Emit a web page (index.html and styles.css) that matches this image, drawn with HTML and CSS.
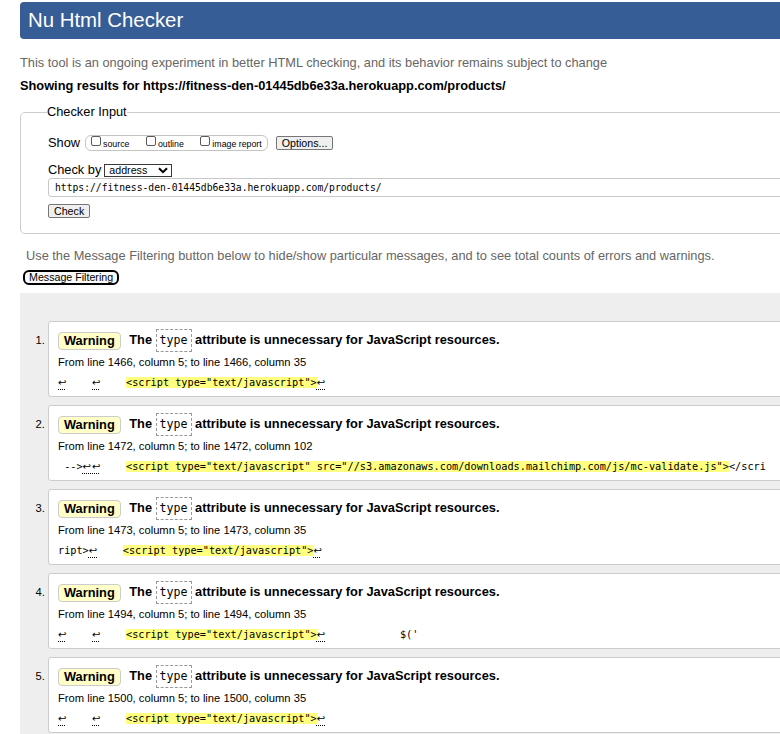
FILE: index.html
```html
<!DOCTYPE html>
<html lang="en">
<head>
<meta charset="utf-8">
<title>Nu Html Checker</title>
<link rel="stylesheet" href="styles.css">
</head>
<body>
<div class="page">
  <h1 class="masthead">Nu Html Checker</h1>
  <p class="intro">This tool is an ongoing experiment in better HTML checking, and its behavior remains subject to change</p>
  <p class="showing">Showing results for https://fitness-den-01445db6e33a.herokuapp.com/products/</p>
  <form class="checker">
    <fieldset class="checker-input">
      <legend>Checker Input</legend>
      <div class="row row-show">
        <span class="label">Show</span>
        <span class="show-box">
          <label class="opt"><input type="checkbox"><span>source</span></label>
          <label class="opt"><input type="checkbox"><span>outline</span></label>
          <label class="opt"><input type="checkbox"><span>image report</span></label>
        </span>
        <button type="button" class="btn btn-options">Options...</button>
      </div>
      <div class="row row-by">
        <span class="label">Check by</span>
        <span class="select">address<svg width="10" height="7" viewBox="0 0 10 7"><path d="M1 1.2 L5 5.2 L9 1.2" fill="none" stroke="#000" stroke-width="2"/></svg></span>
      </div>
      <input class="url" type="text" value="https://fitness-den-01445db6e33a.herokuapp.com/products/">
      <div class="row row-submit"><button type="button" class="btn">Check</button></div>
    </fieldset>
  </form>
  <p class="filter-note">Use the Message Filtering button below to hide/show particular messages, and to see total counts of errors and warnings.</p>
  <button type="button" class="filter-btn">Message Filtering</button>
  <div class="results">
    <ol class="messages">
      <li class="msg">
        <p class="title"><span class="badge">Warning</span> The <code class="kw">type</code> attribute is unnecessary for JavaScript resources.</p>
        <p class="loc">From line 1466, column 5; to line 1466, column 35</p>
        <p class="extract"><span class="lf">↩</span>    <span class="lf">↩</span>    <mark>&lt;script type="text/javascript"&gt;</mark><span class="lf">↩</span></p>
      </li>
      <li class="msg">
        <p class="title"><span class="badge">Warning</span> The <code class="kw">type</code> attribute is unnecessary for JavaScript resources.</p>
        <p class="loc">From line 1472, column 5; to line 1472, column 102</p>
        <p class="extract"> --&gt;<span class="lf">↩</span><span class="lf">↩</span>    <mark>&lt;script type="text/javascript" src="//s3.amazonaws.com/downloads.mailchimp.com/js/mc-validate.js"&gt;</mark>&lt;/scri</p>
      </li>
      <li class="msg">
        <p class="title"><span class="badge">Warning</span> The <code class="kw">type</code> attribute is unnecessary for JavaScript resources.</p>
        <p class="loc">From line 1473, column 5; to line 1473, column 35</p>
        <p class="extract">ript&gt;<span class="lf">↩</span>    <mark>&lt;script type="text/javascript"&gt;</mark><span class="lf">↩</span></p>
      </li>
      <li class="msg">
        <p class="title"><span class="badge">Warning</span> The <code class="kw">type</code> attribute is unnecessary for JavaScript resources.</p>
        <p class="loc">From line 1494, column 5; to line 1494, column 35</p>
        <p class="extract"><span class="lf">↩</span>    <span class="lf">↩</span>    <mark>&lt;script type="text/javascript"&gt;</mark><span class="lf">↩</span>            $('</p>
      </li>
      <li class="msg">
        <p class="title"><span class="badge">Warning</span> The <code class="kw">type</code> attribute is unnecessary for JavaScript resources.</p>
        <p class="loc">From line 1500, column 5; to line 1500, column 35</p>
        <p class="extract"><span class="lf">↩</span>    <span class="lf">↩</span>    <mark>&lt;script type="text/javascript"&gt;</mark><span class="lf">↩</span></p>
      </li>
    </ol>
  </div>
</div>
</body>
</html>
```

FILE: styles.css
```css
html {
  overflow: hidden;
}

body {
  margin: 0;
  background: #fff;
  color: #000;
  font-family: "Liberation Sans", Arial, sans-serif;
  font-size: 12.8px;
}

.page {
  width: 1000px;
  padding: 2px 0 0 20px;
}

.masthead {
  margin: 0;
  height: 37px;
  line-height: 37px;
  padding-left: 8px;
  background: #365d95;
  color: #fff;
  font-size: 20.4px;
  font-weight: normal;
  border-radius: 4px 0 0 4px;
}

.intro {
  margin: 16px 0 0;
  line-height: 16px;
  color: #666;
}

.showing {
  margin: 7px 0 0;
  line-height: 16px;
  font-weight: bold;
}

.checker {
  margin: 10px 0 0;
}

.checker-input {
  margin: 0;
  padding: 15px 0 15px 27px;
  border: 1px solid #ccc;
  border-radius: 5px;
  min-width: 0;
}

.checker-input legend {
  padding: 0;
  margin-left: -1px;
  line-height: 16px;
  font-size: 12.8px;
}

.row {
  display: flex;
  align-items: center;
}

.row-show {
  height: 16px;
}

.label {
  line-height: 16px;
}

.show-box {
  display: flex;
  align-items: flex-start;
  box-sizing: border-box;
  height: 16px;
  margin-left: 5px;
  padding: 0 5px 0 5px;
  border: 1px solid #c4c4c4;
  border-radius: 6px;
}

.opt {
  display: flex;
  align-items: flex-start;
}

.opt + .opt {
  margin-left: 16.5px;
}

.opt input {
  appearance: none;
  -webkit-appearance: none;
  box-sizing: border-box;
  width: 10px;
  height: 10px;
  margin: 0 2px 0 0;
  border: 1px solid #5a5a5a;
  border-radius: 2px;
  background: #fff;
}

.opt span {
  font-size: 8.8px;
  line-height: 11px;
  padding-top: 3px;
}

.btn {
  box-sizing: border-box;
  height: 14px;
  padding: 0 5px;
  border: 1px solid #767676;
  border-radius: 2px;
  background: #efefef;
  color: #000;
  font-family: "Liberation Sans", Arial, sans-serif;
  font-size: 10.67px;
  line-height: 12px;
}

.btn-options {
  margin-left: 8px;
}

.row-by {
  margin-top: 11px;
  height: 16px;
}

.select {
  display: flex;
  align-items: center;
  justify-content: space-between;
  box-sizing: border-box;
  width: 68px;
  height: 13px;
  margin-left: 3px;
  padding: 0 3px 0 4px;
  border: 1px solid #3a3a3a;
  background: #fff;
  font-size: 10.67px;
}

.url {
  display: block;
  box-sizing: border-box;
  width: 900px;
  height: 19px;
  margin: 0;
  padding: 0 6px;
  border: 1px solid #c8c8c8;
  border-radius: 3px;
  background: #fff;
  color: #000;
  font-family: "DejaVu Sans Mono", "Liberation Mono", monospace;
  font-size: 9.7px;
}

.row-submit {
  margin-top: 7px;
}

.filter-note {
  margin: 14px 0 0 6px;
  line-height: 16px;
  color: #666;
}

.filter-btn {
  display: block;
  box-sizing: border-box;
  height: 15px;
  margin: 6px 0 0 3px;
  padding: 0 4px;
  border: 2px solid #000;
  border-radius: 6px;
  background: #fafafa;
  color: #000;
  font-family: "Liberation Sans", Arial, sans-serif;
  font-size: 10.67px;
  line-height: 11px;
}

.results {
  margin-top: 8px;
  padding: 28px 0 40px 28px;
  background: #eee;
}

.messages {
  margin: 0;
  padding: 0;
  list-style: decimal outside;
}

.msg {
  margin: 0 0 8px;
  padding: 6px 9px 4px;
  border: 1px solid #ccc;
  border-radius: 3px;
  background: #fff;
  font-size: 11.2px;
}

.msg::marker {
  font-size: 11.2px;
  color: #000;
}

.msg p {
  margin: 0;
}

.title {
  height: 23px;
  line-height: 23px;
  font-size: 12.8px;
  font-weight: bold;
  white-space: nowrap;
}

.badge {
  display: inline-block;
  vertical-align: middle;
  margin-right: 5px;
  padding: 0 5px;
  line-height: 16px;
  border: 1px solid #ccc;
  border-radius: 4px;
  background: #ffffc8;
}

.kw {
  display: inline-block;
  vertical-align: middle;
  padding: 0 3px;
  line-height: 21px;
  border: 1px dashed #999;
  font-family: "DejaVu Sans Mono", "Liberation Mono", monospace;
  font-size: 11.6px;
  font-weight: normal;
}

.msg .loc {
  margin-top: 3px;
  line-height: 16px;
}

.msg .extract {
  margin-top: 4px;
  line-height: 18px;
  white-space: pre;
  font-family: "DejaVu Sans Mono", "Liberation Mono", monospace;
  font-size: 10.22px;
}

.extract mark {
  background: #ffff80;
  color: #000;
}

.lf {
  display: inline-block;
  width: 9.4px;
  font-family: "DejaVu Sans", sans-serif;
  font-size: 10px;
  text-decoration: underline dotted #000;
  text-underline-offset: 3px;
}
```
